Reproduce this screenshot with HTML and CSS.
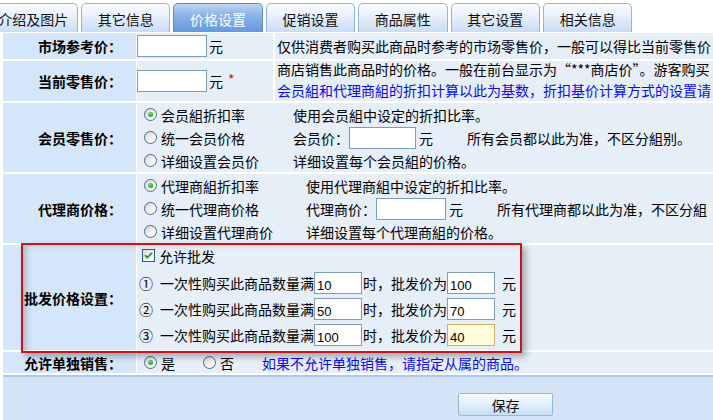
FILE: index.html
```html
<!DOCTYPE html>
<html lang="zh-CN">
<head>
<meta charset="utf-8">
<title>价格设置</title>
<link rel="stylesheet" href="styles.css">
</head>
<body>
<div class="page">
  <div class="tabs">
    <div class="tab first">介绍及图片</div>
    <div class="tab">其它信息</div>
    <div class="tab active">价格设置</div>
    <div class="tab">促销设置</div>
    <div class="tab">商品属性</div>
    <div class="tab">其它设置</div>
    <div class="tab">相关信息</div>
  </div>

  <div class="form">
    <div class="lbl">市场参考价：</div>
    <div class="val split">
      <div class="sub sub1"><input class="inp w70" type="text" value=""><span class="unit">元</span></div>
      <div class="sub sub2">仅供消费者购买此商品时参考的市场零售价，一般可以得比当前零售价</div>
    </div>

    <div class="lbl">当前零售价：</div>
    <div class="val split">
      <div class="sub sub1"><input class="inp w70" type="text" value=""><span class="unit">元</span><span class="req">*</span></div>
      <div class="sub sub2 two">
        <div>商店销售此商品时的价格。一般在前台显示为“***商店价”。游客购买</div>
        <div class="blue">会员組和代理商組的折扣计算以此为基数，折扣基价计算方式的设置请</div>
      </div>
    </div>

    <div class="lbl">会员零售价：</div>
    <div class="val opts">
      <div class="line"><div class="c1 c1a"><span class="radio on"></span>会员組折扣率</div><span>使用会员組中设定的折扣比率。</span></div>
      <div class="line"><div class="c1 c1a"><span class="radio"></span>统一会员价格</div><span>会员价：</span><input class="inp w67" type="text" value=""><span class="unit2">元</span><span class="note">所有会员都以此为准，不区分組别。</span></div>
      <div class="line"><div class="c1 c1a"><span class="radio"></span>详细设置会员价</div><span>详细设置每个会员組的价格。</span></div>
    </div>

    <div class="lbl">代理商价格：</div>
    <div class="val opts">
      <div class="line"><div class="c1 c1b"><span class="radio on"></span>代理商組折扣率</div><span>使用代理商組中设定的折扣比率。</span></div>
      <div class="line"><div class="c1 c1b"><span class="radio"></span>统一代理商价格</div><span>代理商价：</span><input class="inp w70" type="text" value=""><span class="unit2">元</span><span class="note">所有代理商都以此为准，不区分組</span></div>
      <div class="line"><div class="c1 c1b"><span class="radio"></span>详细设置代理商价</div><span>详细设置每个代理商組的价格。</span></div>
    </div>

    <div class="lbl">批发价格设置：</div>
    <div class="val whole">
      <div class="cbline">
        <svg class="cb" width="13" height="13" viewBox="0 0 13 13" aria-hidden="true">
          <defs><linearGradient id="cbg" x1="0" y1="0" x2="1" y2="1"><stop offset="0" stop-color="#dcdcd6"/><stop offset="1" stop-color="#ffffff"/></linearGradient></defs>
          <rect x="0.5" y="0.5" width="12" height="12" fill="url(#cbg)" stroke="#2a5a8e"/>
          <path d="M3 6.2 L5.3 8.6 L10 3.8" fill="none" stroke="#21a121" stroke-width="1.9"/>
        </svg>
        <span>允许批发</span>
      </div>
      <div class="wline"><span class="num">①</span><span class="wt">一次性购买此商品数量满</span><input class="inp w48" type="text" value="10"><span class="wt2">时，批发价为</span><input class="inp w48" type="text" value="100"><span class="yuan">元</span></div>
      <div class="wline"><span class="num">②</span><span class="wt">一次性购买此商品数量满</span><input class="inp w48" type="text" value="50"><span class="wt2">时，批发价为</span><input class="inp w48" type="text" value="70"><span class="yuan">元</span></div>
      <div class="wline"><span class="num">③</span><span class="wt">一次性购买此商品数量满</span><input class="inp w48" type="text" value="100"><span class="wt2">时，批发价为</span><input class="inp w48 focus" type="text" value="40"><span class="yuan">元</span></div>
    </div>

    <div class="lbl">允许单独销售：</div>
    <div class="val single">
      <span class="radio on"></span><span class="rt">是</span>
      <span class="radio r2"></span><span class="rt">否</span>
      <span class="blue hint">如果不允许单独销售，请指定从属的商品。</span>
    </div>
  </div>

  <div class="footer">
    <button class="btn" type="button">保存</button>
  </div>

  <div class="annot"></div>
</div>
</body>
</html>
```

FILE: styles.css
```css
html, body {
  margin: 0;
  padding: 0;
  background: #ffffff;
  overflow: hidden;
}

body {
  font-family: "Noto Sans CJK SC", "Noto Sans", sans-serif;
  font-size: 14px;
  color: #000;
}

.page {
  position: relative;
  width: 1000px;
}

/* ---------- tabs ---------- */
.tabs {
  display: flex;
  gap: 3px;
  height: 33px;
  box-sizing: border-box;
  padding-top: 3px;
  margin-left: -11.4px;
}

.tab {
  flex: none;
  width: 89.4px;
  height: 29px;
  box-sizing: border-box;
  border: 1px solid #93b4de;
  border-bottom: none;
  border-radius: 5px 5px 0 0;
  background: linear-gradient(#fbfdff, #e6effb 45%, #cadcf4);
  display: flex;
  align-items: center;
  justify-content: center;
  line-height: 1;
  padding-top: 1px;
  color: #111;
}

.tab.active {
  background: linear-gradient(#c0d6f3, #8ab3e7 40%, #6798dc);
  border-color: #5f8bc9;
  color: #fff;
}

/* ---------- form grid ---------- */
.form {
  display: grid;
  grid-template-columns: 133px 1fr;
  grid-template-rows: 26px 40px 69px 69px 105px 21px;
  row-gap: 2px;
  column-gap: 1px;
  margin-left: 3px;
  width: 997px;
}

.lbl {
  background: #d5e6fa;
  font-weight: bold;
  display: flex;
  align-items: center;
  justify-content: flex-end;
  padding-right: 14px;
  white-space: nowrap;
}

.val {
  background: #e6eef8;
  white-space: nowrap;
}

.split {
  background: transparent;
  display: flex;
  gap: 2px;
}

.sub {
  background: #e6eef8;
  display: flex;
  align-items: center;
}

.sub1 {
  width: 136px;
  flex: none;
}

.sub2 {
  flex: 1;
  padding-left: 2px;
}

.two {
  flex-direction: column;
  align-items: flex-start;
  justify-content: center;
  line-height: 21px;
  padding-bottom: 2px;
}

.blue {
  color: #0a0aee;
}

.unit {
  margin-left: 2px;
}

.req {
  color: #e01010;
  margin-left: 5px;
  position: relative;
  top: -2px;
}

/* ---------- inputs ---------- */
.inp {
  box-sizing: border-box;
  height: 22px;
  margin: 0;
  border: 1px solid #7f9db9;
  background: #fff;
  font-family: "Liberation Sans", Arial, sans-serif;
  font-size: 13px;
  padding: 5px 2px 0;
  color: #000;
  outline: none;
}

.w70 { width: 70px; }
.w67 { width: 67px; }
.w48 { width: 48px; }

.inp.focus {
  background: #fffcd9;
  border: 1px solid #d0b060;
}

/* ---------- radio options ---------- */
.opts {
  display: flex;
  flex-direction: column;
}

.line {
  height: 23px;
  display: flex;
  align-items: center;
}

.c1 {
  flex: none;
  box-sizing: border-box;
  padding-left: 7px;
  display: flex;
  align-items: center;
  gap: 4px;
}

.c1a { width: 156px; }
.c1b { width: 169px; }

.unit2 {
  margin-left: 3px;
}

.note {
  margin-left: 34px;
}

.radio {
  flex: none;
  display: inline-block;
  width: 13px;
  height: 13px;
  box-sizing: border-box;
  border-radius: 50%;
  border: 1px solid #3f6c9c;
  background: linear-gradient(135deg, #d4d4ce, #f4f4f2 60%, #ffffff);
  position: relative;
}

.radio.on::after {
  content: "";
  position: absolute;
  left: 3px;
  top: 3px;
  width: 5px;
  height: 5px;
  border-radius: 50%;
  background: radial-gradient(circle at 40% 35%, #7ee07e, #22a322 70%);
}

/* ---------- wholesale ---------- */
.whole {
  display: flex;
  flex-direction: column;
}

.cbline {
  height: 21px;
  margin-bottom: 4px;
  padding-left: 5px;
  display: flex;
  align-items: center;
  gap: 4px;
}

.cb {
  flex: none;
  display: block;
}

.wline {
  height: 26px;
  display: flex;
  align-items: center;
  padding-left: 2px;
}

.num {
  width: 14px;
  margin-right: 7px;
}

.wt2 {
  margin-left: 1px;
}

.yuan {
  margin-left: 7px;
}

/* ---------- single sale ---------- */
.single {
  display: flex;
  align-items: center;
  padding-left: 7px;
}

.rt {
  margin-left: 4px;
}

.r2 {
  margin-left: 28px;
}

.hint {
  margin-left: 28px;
}

/* ---------- footer ---------- */
.footer {
  margin-left: 3px;
  margin-top: 2px;
  border-top: 2px solid #abc7e9;
  background: #d4e3f5;
  height: 60px;
  padding-top: 16px;
  box-sizing: border-box;
}

.btn {
  display: block;
  margin: 0 0 0 455px;
  width: 95px;
  height: 23px;
  padding: 0;
  border: 1px solid #93b9e0;
  border-radius: 2px;
  background: linear-gradient(#f7fbff, #e2eefa 50%, #c6ddf4);
  font-family: "Noto Sans CJK SC", "Noto Sans", sans-serif;
  font-size: 14px;
  color: #111;
  line-height: 20px;
}

/* ---------- annotation overlay ---------- */
.annot {
  position: absolute;
  left: 21px;
  top: 243px;
  width: 501px;
  height: 110px;
  box-sizing: border-box;
  border: 2px solid #c8141e;
  box-shadow: 4px 4px 6px rgba(0, 0, 0, 0.28), inset 6px 2px 7px -3px rgba(0, 0, 0, 0.22);
  pointer-events: none;
}
```
